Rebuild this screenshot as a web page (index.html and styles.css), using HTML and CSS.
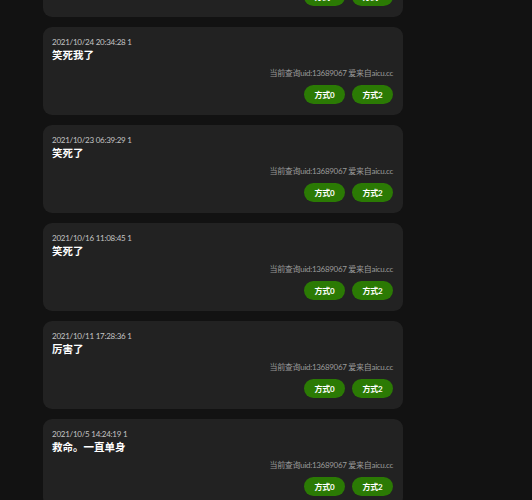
FILE: index.html
```html
<!DOCTYPE html>
<html lang="zh">
<head>
<meta charset="utf-8">
<link rel="stylesheet" href="styles.css">
</head>
<body>
<div class="list">
  <div class="card">
    <div class="date">2021/10/25 10:11:12 1</div>
    <div class="title">笑死了</div>
    <div class="meta">当前查询uid:13689067 爱来自aicu.cc</div>
    <div class="actions"><button class="btn">方式0</button><button class="btn">方式2</button></div>
  </div>
  <div class="card">
    <div class="date">2021/10/24 20:34:28 1</div>
    <div class="title">笑死我了</div>
    <div class="meta">当前查询uid:13689067 爱来自aicu.cc</div>
    <div class="actions"><button class="btn">方式0</button><button class="btn">方式2</button></div>
  </div>
  <div class="card">
    <div class="date">2021/10/23 06:39:29 1</div>
    <div class="title">笑死了</div>
    <div class="meta">当前查询uid:13689067 爱来自aicu.cc</div>
    <div class="actions"><button class="btn">方式0</button><button class="btn">方式2</button></div>
  </div>
  <div class="card">
    <div class="date">2021/10/16 11:08:45 1</div>
    <div class="title">笑死了</div>
    <div class="meta">当前查询uid:13689067 爱来自aicu.cc</div>
    <div class="actions"><button class="btn">方式0</button><button class="btn">方式2</button></div>
  </div>
  <div class="card">
    <div class="date">2021/10/11 17:28:36 1</div>
    <div class="title">厉害了</div>
    <div class="meta">当前查询uid:13689067 爱来自aicu.cc</div>
    <div class="actions"><button class="btn">方式0</button><button class="btn">方式2</button></div>
  </div>
  <div class="card">
    <div class="date">2021/10/5 14:24:19 1</div>
    <div class="title">救命。一直单身</div>
    <div class="meta">当前查询uid:13689067 爱来自aicu.cc</div>
    <div class="actions"><button class="btn">方式0</button><button class="btn">方式2</button></div>
  </div>
</div>
</body>
</html>
```
FILE: styles.css
```css
html, body {
  margin: 0;
  padding: 0;
  background: #121212;
  overflow: hidden;
}
body {
  font-family: Lato, "Noto Sans CJK SC", sans-serif;
  color: #fff;
}
.list {
  display: flex;
  flex-direction: column;
  gap: 10px;
  width: 360px;
  margin: -71px 0 0 43px;
}
.card {
  background: #222222;
  border-radius: 9px;
  padding: 9px 10px 10px 9px;
  height: 88px;
  box-sizing: border-box;
}
.date {
  font-size: 8px;
  letter-spacing: -0.25px;
  line-height: 12px;
  color: #c4c4c4;
}
.title {
  font-size: 10.5px;
  line-height: 15px;
  font-weight: 700;
  color: #ffffff;
}
.meta {
  margin-top: 4px;
  font-size: 8px;
  letter-spacing: -0.3px;
  line-height: 12px;
  color: #9a9a9a;
  text-align: right;
}
.actions {
  margin-top: 6px;
  display: flex;
  justify-content: flex-end;
  gap: 7px;
}
.btn {
  width: 41px;
  height: 19px;
  border: none;
  border-radius: 10px;
  background: #2b7a04;
  color: #fff;
  font-family: Lato, "Noto Sans CJK SC", sans-serif;
  font-size: 8px;
  font-weight: 700;
  letter-spacing: -0.2px;
  padding: 0;
}
```
